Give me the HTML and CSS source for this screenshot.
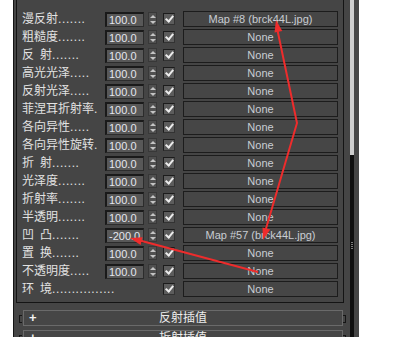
FILE: index.html
```html
<!DOCTYPE html>
<html>
<head>
	<meta charset="utf-8">
	<meta name="viewport" content="width=device-width, initial-scale=1">
	<title>贴图</title>
	<link rel="stylesheet" href="styles.css">
</head>
<body>
	<div class="panel">
		<div class="main">
			<div class="group">
				<div class="row"><span class="label">漫反射<span class="dots">.......</span></span><span class="num">100.0</span><span class="spin"><i class="up"></i><i class="dn"></i></span><span class="chk"></span><span class="map">Map #8 (brck44L.jpg)</span></div>
				<div class="row"><span class="label">粗糙度<span class="dots">.......</span></span><span class="num">100.0</span><span class="spin"><i class="up"></i><i class="dn"></i></span><span class="chk"></span><span class="map">None</span></div>
				<div class="row"><span class="label">反&ensp;射<span class="dots">.......</span></span><span class="num">100.0</span><span class="spin"><i class="up"></i><i class="dn"></i></span><span class="chk"></span><span class="map">None</span></div>
				<div class="row"><span class="label">高光光泽<span class="dots">.....</span></span><span class="num">100.0</span><span class="spin"><i class="up"></i><i class="dn"></i></span><span class="chk"></span><span class="map">None</span></div>
				<div class="row"><span class="label">反射光泽<span class="dots">.....</span></span><span class="num">100.0</span><span class="spin"><i class="up"></i><i class="dn"></i></span><span class="chk"></span><span class="map">None</span></div>
				<div class="row"><span class="label">菲涅耳折射率<span class="dots">.</span></span><span class="num">100.0</span><span class="spin"><i class="up"></i><i class="dn"></i></span><span class="chk"></span><span class="map">None</span></div>
				<div class="row"><span class="label">各向异性<span class="dots">.....</span></span><span class="num">100.0</span><span class="spin"><i class="up"></i><i class="dn"></i></span><span class="chk"></span><span class="map">None</span></div>
				<div class="row"><span class="label">各向异性旋转<span class="dots">.</span></span><span class="num">100.0</span><span class="spin"><i class="up"></i><i class="dn"></i></span><span class="chk"></span><span class="map">None</span></div>
				<div class="row"><span class="label">折&ensp;射<span class="dots">.......</span></span><span class="num">100.0</span><span class="spin"><i class="up"></i><i class="dn"></i></span><span class="chk"></span><span class="map">None</span></div>
				<div class="row"><span class="label">光泽度<span class="dots">.......</span></span><span class="num">100.0</span><span class="spin"><i class="up"></i><i class="dn"></i></span><span class="chk"></span><span class="map">None</span></div>
				<div class="row"><span class="label">折射率<span class="dots">.......</span></span><span class="num">100.0</span><span class="spin"><i class="up"></i><i class="dn"></i></span><span class="chk"></span><span class="map">None</span></div>
				<div class="row"><span class="label">半透明<span class="dots">.......</span></span><span class="num">100.0</span><span class="spin"><i class="up"></i><i class="dn"></i></span><span class="chk"></span><span class="map">None</span></div>
				<div class="row"><span class="label">凹&ensp;凸<span class="dots">.......</span></span><span class="num">-200.0</span><span class="spin"><i class="up"></i><i class="dn"></i></span><span class="chk"></span><span class="map">Map #57 (brck44L.jpg)</span></div>
				<div class="row"><span class="label">置&ensp;换<span class="dots">.......</span></span><span class="num">100.0</span><span class="spin"><i class="up"></i><i class="dn"></i></span><span class="chk"></span><span class="map">None</span></div>
				<div class="row"><span class="label">不透明度<span class="dots">.....</span></span><span class="num">100.0</span><span class="spin"><i class="up"></i><i class="dn"></i></span><span class="chk"></span><span class="map">None</span></div>
				<div class="row"><span class="label wide">环&ensp;境<span class="dots">................</span></span><span class="chk"></span><span class="map">None</span></div>
			</div>
			<div class="rollout">
				<span class="brk left"></span>
				<div class="bar"><span class="plus">+</span><span class="title">反射插值</span></div>
				<span class="brk right"></span>
			</div>
			<div class="rollout">
				<span class="brk left"></span>
				<div class="bar"><span class="plus">+</span><span class="title">折射插值</span></div>
				<span class="brk right"></span>
			</div>
		</div>
		<div class="scroll">
			<div class="thumb"></div>
			<div class="track"><span class="grip"></span></div>
		</div>
	</div>

	<!-- red annotation arrows drawn over the screenshot -->
	<svg class="marks" width="413" height="337" viewBox="0 0 413 337">
		<polyline points="277,28 297,123 265,232" fill="none" stroke="#ee2c2c" stroke-width="2"/>
		<polygon points="276,20 282.3,31 274.5,32.6" fill="#ee2c2c"/>
		<polygon points="263,240 270.2,229.6 262.5,227.4" fill="#ee2c2c"/>
		<line x1="138" y1="240" x2="258" y2="272" stroke="#ee2c2c" stroke-width="2"/>
		<polygon points="130,238 140.6,245 142.6,237.2" fill="#ee2c2c"/>
	</svg>
</body>
</html>
```

FILE: styles.css
```css
body {
	margin: 0;
	background: #fff;
	font-family: "Liberation Sans", "Noto Sans CJK SC", sans-serif;
	position: relative;
	height: 337px;
	overflow: hidden;
}
.panel {
	display: flex;
	margin-left: 13px;
	width: 346px;
	height: 337px;
	background: #454545;
	border-left: 1px solid #151515;
	box-sizing: border-box;
}
.main {
	width: 330px;
	padding-left: 2px;
}
.group {
	width: 328px;
	box-sizing: border-box;
	padding: 10px 5px 4px 5px;
	border: 1px solid #141414;
	border-top: none;
}
.row {
	display: flex;
	align-items: center;
	height: 18px;
}
.label {
	width: 83px;
	flex: none;
	font-size: 12px;
	line-height: 18px;
	color: #e2e2e2;
	white-space: nowrap;
}
.label.wide {
	width: 135px;
}
.dots {
	letter-spacing: 0.6px;
}
.num {
	width: 39px;
	height: 15px;
	flex: none;
	box-sizing: border-box;
	padding-left: 2px;
	background: #585858;
	border-top: 2px solid #1a1a1a;
	border-left: 2px solid #1a1a1a;
	border-right: 1px solid #2c2c2c;
	border-bottom: 1px solid #2c2c2c;
	font-size: 11px;
	line-height: 12px;
	color: #e4e6ee;
	overflow: hidden;
	white-space: nowrap;
}
.spin {
	display: flex;
	flex-direction: column;
	justify-content: space-around;
	align-items: center;
	width: 9px;
	height: 14px;
	flex: none;
	margin-left: 4px;
	box-sizing: border-box;
	background: #505050;
	border: 1px solid #383838;
}
.spin i {
	display: block;
	width: 0;
	height: 0;
	border-left: 3px solid transparent;
	border-right: 3px solid transparent;
}
.spin .up {
	border-bottom: 3px solid #c4c4c4;
}
.spin .dn {
	border-top: 3px solid #c4c4c4;
}
.chk {
	display: flex;
	align-items: center;
	justify-content: center;
	width: 12px;
	height: 12px;
	flex: none;
	margin-left: 6px;
	box-sizing: border-box;
	background: #5c5c5c;
	border-top: 1px solid #1c1c1c;
	border-left: 1px solid #1c1c1c;
	border-right: 1px solid #333;
	border-bottom: 1px solid #333;
}
.chk::after {
	content: "";
	width: 3px;
	height: 6px;
	margin-top: -2px;
	border: solid #ececec;
	border-width: 0 2px 2px 0;
	transform: rotate(40deg);
}
.map {
	width: 155px;
	height: 16px;
	flex: none;
	margin-left: 8px;
	box-sizing: border-box;
	background: #464646;
	border: 1px solid #1c1c1c;
	font-size: 11px;
	line-height: 14px;
	text-align: center;
	color: #c9cdd3;
	white-space: nowrap;
}
.rollout {
	display: flex;
	align-items: center;
	margin: 7px 0 0 3px;
}
.rollout + .rollout {
	margin-top: 4px;
}
.brk {
	width: 3px;
	height: 8px;
	margin-top: 2px;
	box-sizing: border-box;
	border: 1px solid #151515;
}
.brk.left {
	border-right: none;
}
.brk.right {
	border-left: none;
}
.bar {
	display: grid;
	grid-template-columns: 20px 1fr 20px;
	align-items: center;
	width: 321px;
	height: 16px;
	margin-left: 1px;
	box-sizing: border-box;
	border: 1px solid #6a6a6a;
	background: #464646;
}
.plus {
	padding-left: 5px;
	font-size: 13px;
	font-weight: bold;
	line-height: 14px;
	color: #f2f2f2;
}
.title {
	text-align: center;
	font-size: 12px;
	line-height: 14px;
	color: #ececec;
}
.scroll {
	display: flex;
	flex-direction: column;
	width: 4px;
	margin-left: 4px;
}
.thumb {
	height: 155px;
	background: #cdcdcd;
}
.track {
	flex: 1;
	background: #0f0f0f;
}
.grip {
	display: block;
	width: 2px;
	height: 8px;
	margin: 87px 0 0 1px;
	background: repeating-linear-gradient(#7a7a7a 0 1px, transparent 1px 2px);
}
.marks {
	position: absolute;
	top: 0;
	left: 0;
	pointer-events: none;
}
```
